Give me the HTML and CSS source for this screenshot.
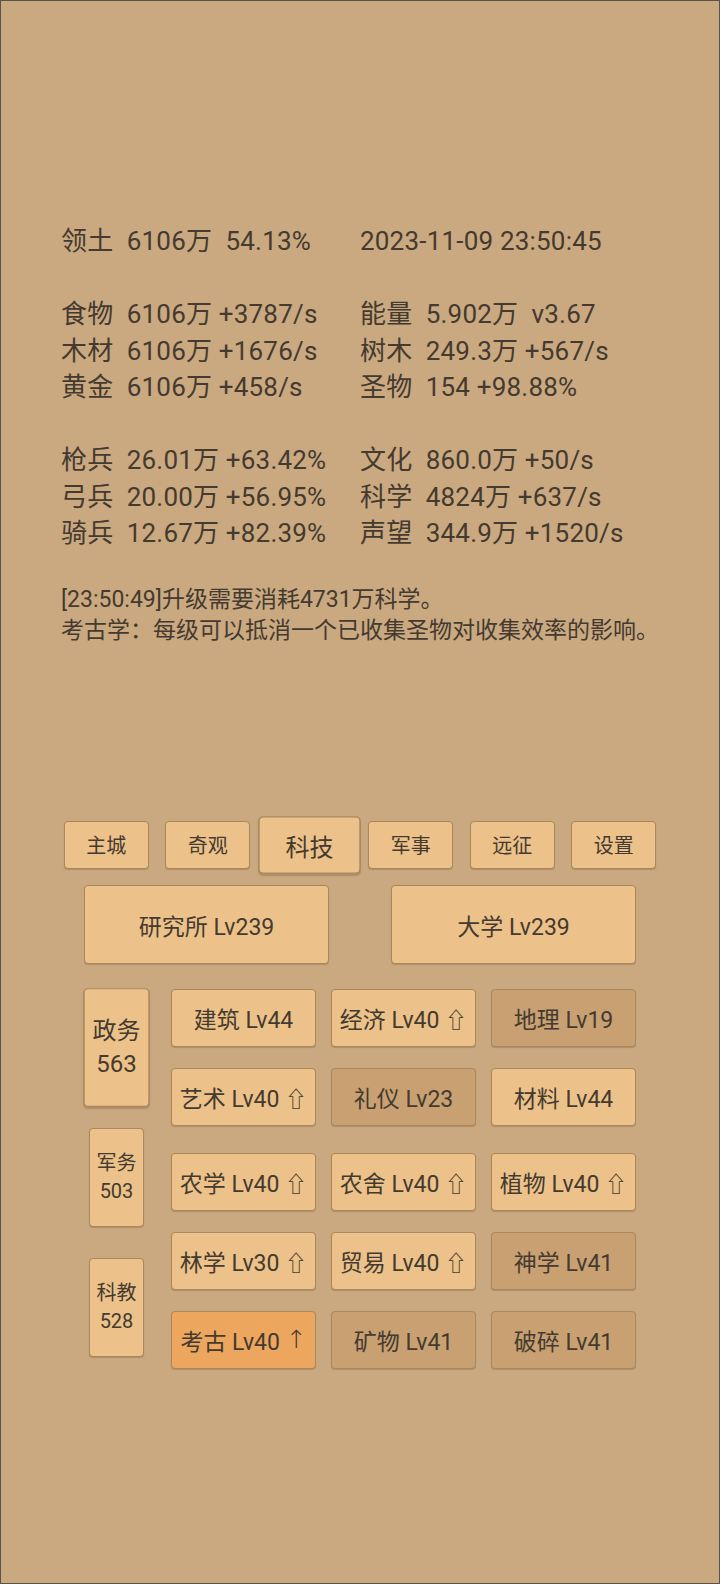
FILE: index.html
```html
<!DOCTYPE html>
<html lang="zh-CN">
<head>
<meta charset="utf-8">
<link rel="stylesheet" href="styles.css">
</head>
<body>
<div class="screen">
  <div class="stats">
    <div>领土  6106万  54.13%</div><div>2023-11-09 23:50:45</div>
    <div> </div><div> </div>
    <div>食物  6106万 +3787/s</div><div>能量  5.902万  v3.67</div>
    <div>木材  6106万 +1676/s</div><div>树木  249.3万 +567/s</div>
    <div>黄金  6106万 +458/s</div><div>圣物  154 +98.88%</div>
    <div> </div><div> </div>
    <div>枪兵  26.01万 +63.42%</div><div>文化  860.0万 +50/s</div>
    <div>弓兵  20.00万 +56.95%</div><div>科学  4824万 +637/s</div>
    <div>骑兵  12.67万 +82.39%</div><div>声望  344.9万 +1520/s</div>
  </div>
  <div class="log">
    <div>[23:50:49]升级需要消耗4731万科学。</div>
    <div>考古学：每级可以抵消一个已收集圣物对收集效率的影响。</div>
  </div>
  <div class="tabs">
    <div class="btn tab">主城</div>
    <div class="btn tab">奇观</div>
    <div class="btn tab active">科技</div>
    <div class="btn tab">军事</div>
    <div class="btn tab">远征</div>
    <div class="btn tab">设置</div>
  </div>
  <div class="bigrow">
    <div class="btn big">研究所 Lv239</div>
    <div class="btn big">大学 Lv239</div>
  </div>
  <div class="tech">
    <div class="side">
      <div class="btn sidebtn active"><span>政务</span><span>563</span></div>
      <div class="btn sidebtn"><span>军务</span><span>503</span></div>
      <div class="btn sidebtn"><span>科教</span><span>528</span></div>
    </div>
    <div class="techgrid">
      <div class="trow">
        <div class="btn cell">建筑 Lv44</div>
        <div class="btn cell">经济 Lv40 <span class="up">⇧</span></div>
        <div class="btn cell dim">地理 Lv19</div>
      </div>
      <div class="trow">
        <div class="btn cell">艺术 Lv40 <span class="up">⇧</span></div>
        <div class="btn cell dim">礼仪 Lv23</div>
        <div class="btn cell">材料 Lv44</div>
      </div>
      <div class="trow wide">
        <div class="btn cell">农学 Lv40 <span class="up">⇧</span></div>
        <div class="btn cell">农舍 Lv40 <span class="up">⇧</span></div>
        <div class="btn cell">植物 Lv40 <span class="up">⇧</span></div>
      </div>
      <div class="trow">
        <div class="btn cell">林学 Lv30 <span class="up">⇧</span></div>
        <div class="btn cell">贸易 Lv40 <span class="up">⇧</span></div>
        <div class="btn cell dim">神学 Lv41</div>
      </div>
      <div class="trow">
        <div class="btn cell hot">考古 Lv40 <span class="up solid">↑</span></div>
        <div class="btn cell dim">矿物 Lv41</div>
        <div class="btn cell dim">破碎 Lv41</div>
      </div>
    </div>
  </div>
</div>
</body>
</html>
```

FILE: styles.css
```css
html, body {
  margin: 0;
  padding: 0;
}
body {
  width: 720px;
  height: 1584px;
  background: #caa981;
  font-family: Roboto, "Noto Sans CJK SC", "DejaVu Sans", sans-serif;
  color: #443a2f;
  overflow: hidden;
}
.screen {
  box-sizing: border-box;
  width: 720px;
  height: 1584px;
  border: 1px solid #57534d;
  padding-top: 222px;
  overflow: hidden;
}
.stats {
  display: grid;
  grid-template-columns: 299px auto;
  margin-left: 60px;
  font-size: 26px;
  line-height: 36.5px;
  white-space: pre;
  letter-spacing: 0.2px;
}
.log {
  margin: 32px 0 0 60px;
  font-size: 23px;
  line-height: 31px;
}
.btn {
  box-sizing: border-box;
  background: #ecc28a;
  border: 1px solid #a8885c;
  border-radius: 4px;
  box-shadow: 0 1px 1px rgba(90, 60, 30, 0.25);
  display: flex;
  align-items: center;
  justify-content: center;
  white-space: pre;
}
.btn.dim {
  background: #c8a072;
}
.btn.hot {
  background: #eda65e;
}
.tabs {
  display: flex;
  justify-content: center;
  gap: 16.5px;
  margin-top: 175px;
}
.tab {
  width: 85px;
  height: 48px;
  font-size: 20px;
}
.active {
  transform: scale(1.2);
}
.bigrow {
  display: flex;
  justify-content: center;
  gap: 62px;
  margin-top: 16.5px;
}
.big {
  width: 245px;
  height: 79px;
  font-size: 23px;
}
.tech {
  display: flex;
  margin: 24.5px 0 0 88px;
}
.side {
  display: flex;
  flex-direction: column;
  gap: 31.5px;
  padding-top: 9.5px;
  width: 55px;
  margin-right: 27px;
}
.sidebtn {
  width: 55px;
  height: 98.5px;
  flex-direction: column;
  font-size: 20px;
  line-height: 28px;
}
.techgrid {
  display: flex;
  flex-direction: column;
  gap: 21px;
}
.trow {
  display: flex;
  gap: 15px;
}
.trow.wide {
  margin-top: 6px;
}
.cell {
  width: 145px;
  height: 58px;
  font-size: 23px;
}
.up {
  font-family: "DejaVu Sans", sans-serif;
  font-size: 22px;
  font-weight: 300;
}
.up.solid {
  font-size: 25px;
}
```
